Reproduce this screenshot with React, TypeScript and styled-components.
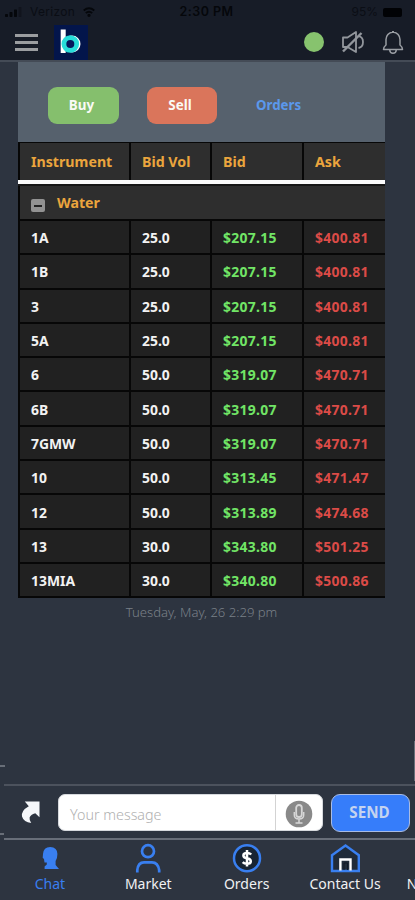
import React from "react";
import styled, { createGlobalStyle } from "styled-components";

const GlobalStyle = createGlobalStyle`
  * { box-sizing: border-box; }
  body { margin: 0; background: #2d3440; overflow: hidden; }
`;

const Screen = styled.div`
  position: relative;
  width: 415px;
  height: 900px;
  overflow: hidden;
  display: flex;
  flex-direction: column;
  background: #2d3440;
  color: #f2f2f2;
  font-family: "Noto Sans", "Open Sans", sans-serif;
`;

const TopArea = styled.header`
  flex: none;
  height: 62px;
  background: #171c27;
  border-bottom: 2px solid #444b56;
`;

const StatusBar = styled.div`
  height: 24px;
  display: grid;
  grid-template-columns: 1fr auto 1fr;
  align-items: center;
  padding: 0 13px 0 5px;
  color: #05070b;
  font: 12px/24px Inter, sans-serif;
`;

const StatusGroup = styled.div<{ $end?: boolean }>`
  display: flex;
  align-items: center;
  gap: ${(p) => (p.$end ? 5 : 8)}px;
  justify-content: ${(p) => (p.$end ? "flex-end" : "flex-start")};
  letter-spacing: ${(p) => (p.$end ? 0 : 0.3)}px;
  color: ${(p) => (p.$end ? "#0b0e15" : "#0a0d14")};
`;

const Clock = styled.span`
  font-weight: 600;
  font-size: 12.5px;
  letter-spacing: 0.45px;
  margin-left: 6px;
`;

const Battery = styled.span`
  width: 19px;
  height: 9px;
  border-radius: 2px;
  background: #010205;
`;

const AppBar = styled.div`
  height: 36px;
  display: flex;
  align-items: center;
  padding: 0 11px 0 15px;
`;

const Logo = styled.div`
  width: 34px;
  height: 35px;
  margin: 1px 0 0 16px;
  background: #03154b;
`;

const Actions = styled.div`
  margin-left: auto;
  display: flex;
  align-items: center;
`;

const OnlineDot = styled.span`
  width: 20px;
  height: 20px;
  border-radius: 50%;
  background: #87c36e;
  margin-right: 17px;
`;

const BellGap = styled.span`
  display: flex;
  margin-left: 17px;
`;

const Conversation = styled.main`
  flex: none;
  height: 722px;
  padding: 0 30px 0 18px;
`;

const Card = styled.section`
  width: 367px;
  background: #070707;
`;

const ActionStrip = styled.div`
  height: 80px;
  display: flex;
  align-items: center;
  padding: 6px 0 0 30px;
  background: #56616d;
`;

const TradeButton = styled.button<{ $color: string; $width: number }>`
  width: ${(p) => p.$width}px;
  height: 37px;
  margin-right: 28px;
  padding: 0 4px 0 0;
  border: 0;
  border-radius: 9px;
  background: ${(p) => p.$color};
  color: #fafaf5;
  font: 700 13.4px/37px "Noto Sans", sans-serif;
`;

const OrdersLink = styled.span`
  margin-left: 11px;
  color: #5b98ec;
  font-weight: 700;
  font-size: 13.3px;
`;

const GridRow = styled.div<{ $head?: boolean }>`
  display: grid;
  grid-template-columns: 109px 79px 90px 81px;
  column-gap: 2px;
  height: ${(p) => (p.$head ? 38 : 34.3)}px;
  padding: ${(p) => (p.$head ? "1px 0 0 2px" : "0 0 2px 2px")};
`;

const Cell = styled.div<{ $color?: string; $head?: boolean; $price?: boolean }>`
  display: flex;
  align-items: center;
  padding: ${(p) => (p.$head ? 0 : 2)}px 0 0 11px;
  background: ${(p) => (p.$head ? "#2e2e2e" : "#212121")};
  color: ${(p) => p.$color || "#f2f2f2"};
  font-size: ${(p) => (p.$head ? 14.2 : 13.9)}px;
  font-weight: 700;
  letter-spacing: ${(p) => (p.$price ? 0.3 : 0)}px;
  line-height: 20px;
  white-space: nowrap;
`;

const Divider = styled.div`
  height: 6px;
  background: #fbfbfb;
  border-bottom: 2px solid #161616;
`;

const GroupRow = styled.div`
  height: 35px;
  display: flex;
  align-items: center;
  margin-left: 2px;
  padding-left: 11px;
  background: #2e2e2e;
  border-bottom: 2px solid #070707;
  color: #eba53d;
  font-size: 14.2px;
  font-weight: 700;
`;

const CollapseBox = styled.span`
  width: 14px;
  height: 13px;
  margin: 6px 12px 0 0;
  border-radius: 2px;
  background: #929292;
  display: grid;
  place-items: center;
  &::after {
    content: "";
    width: 8px;
    height: 2px;
    background: #222;
  }
`;

const Timestamp = styled.div`
  width: 367px;
  margin-top: 4px;
  text-align: center;
  color: #7a8088;
  font-size: 13.1px;
  font-weight: 300;
  line-height: 20px;
`;

const Composer = styled.form`
  flex: none;
  height: 56px;
  margin: 0 0 0 4px;
  display: flex;
  align-items: center;
  padding: 0 5px 0 16px;
  border-top: 2px solid #4c525d;
  border-bottom: 2px solid #686e79;
`;

const MessageBox = styled.div`
  flex: none;
  width: 265px;
  height: 37px;
  margin: 1px 8px 0 17px;
  display: flex;
  align-items: center;
  overflow: hidden;
  border: 1px solid #d6d9dd;
  border-radius: 7px;
  background: #fff;
`;

const MessageText = styled.span`
  flex: 1;
  height: 100%;
  padding: 4px 0 0 11px;
  color: #b0b0b0;
  font-size: 14.3px;
  font-weight: 300;
  line-height: 32px;
  border-right: 1px solid #d3d3d3;
`;

const MicHolder = styled.span`
  width: 46px;
  height: 100%;
  display: grid;
  place-items: center;
  padding-top: 3px;
`;

const SendButton = styled.button`
  width: 79px;
  height: 38px;
  margin-top: 1px;
  padding: 0 2px 1px 0;
  border: 1.5px solid #a9bce4;
  border-radius: 9px;
  background: #367dfa;
  color: #c4d3ef;
  font: 700 15.2px/32px "Noto Sans", sans-serif;
`;

const TabBar = styled.nav`
  flex: none;
  width: 516px;
  height: 60px;
  display: grid;
  grid-template-columns: repeat(5, 98.4px);
  padding-left: 0.7px;
`;

const Tab = styled.div<{ $active?: boolean; $partial?: boolean }>`
  display: flex;
  flex-direction: column;
  align-items: ${(p) => (p.$partial ? "flex-start" : "center")};
  padding: 3px 0 0 ${(p) => (p.$partial ? 12.5 : 0)}px;
  color: ${(p) => (p.$active ? "#397ff0" : "#f0f1f3")};
  font-size: 14px;
  line-height: 20px;
  svg { flex: none; height: 31px; }
`;

const TabSpacer = styled.span`
  height: 31px;
`;

const EdgeMark = styled.span<{ $top: number; $height: number; $width: number; $right?: boolean }>`
  position: absolute;
  top: ${(p) => p.$top}px;
  height: ${(p) => p.$height}px;
  width: ${(p) => p.$width}px;
  ${(p) => (p.$right ? "right: 0;" : "left: 0;")}
  background: #686e78;
`;

const SignalIcon = () => (
  <svg width="17" height="11" viewBox="0 0 17 11" fill="#05070b">
    <rect x="0" y="7" width="3" height="3" rx=".7" />
    <rect x="4.5" y="5" width="3" height="5" rx=".7" />
    <rect x="9" y="2.5" width="3" height="7.5" rx=".7" />
    <rect x="13.5" y="0" width="3" height="10" rx=".7" opacity=".35" />
  </svg>
);

const WifiIcon = () => (
  <svg width="12" height="10" viewBox="0 0 12 10" fill="none" stroke="#05070b" strokeWidth="1.9">
    <path d="M.7 3.4Q6-.8 11.3 3.4M2.8 6Q6 3.4 9.2 6" />
    <circle cx="6" cy="8.3" r=".7" fill="#05070b" />
  </svg>
);

const MenuIcon = () => (
  <svg width="23" height="20" viewBox="0 0 23 20" stroke="#9b9da0" strokeWidth="3">
    <path d="M0 3.5H23M0 10.5H23M0 17.5H23" />
  </svg>
);

const LogoMark = () => (
  <svg width="34" height="35" viewBox="0 0 34 35">
    <rect x="6.7" y="4.5" width="5" height="23.5" fill="#fff" />
    <circle cx="18" cy="19" r="6" fill="none" stroke="#fff" strokeWidth="5" />
    <circle cx="16.3" cy="19" r="6.4" fill="#06165c" stroke="#27dcda" strokeWidth="4.8" />
  </svg>
);

const MutedIcon = () => (
  <svg width="24" height="24" viewBox="0 0 24 24" fill="none" stroke="#92969c" strokeWidth="1.8" strokeLinejoin="round">
    <path d="M2 7.5H6.5L15 2V22L6.5 17H2ZM17.5 6.2Q22 7 22 12T17.5 18" />
    <path d="M2 21.5L20.5 3" strokeWidth="2.4" />
  </svg>
);

const BellIcon = () => (
  <svg width="22" height="25" viewBox="0 0 22 25" fill="none" stroke="#999da3" strokeWidth="1.5" strokeLinejoin="round">
    <path d="M1.5 19.5Q1.5 17 4 15V9.5Q4.3 3.2 11 2Q17.7 3.2 18 9.5V15Q20.5 17 20.5 19.5ZM7.7 20Q8 23.3 11 23.3T14.3 20M10 1.8H12" />
  </svg>
);

const ShareArrow = () => (
  <svg width="21" height="24" viewBox="0 0 21 24" fill="#f5f7fa">
    <path d="M4.8 1.5H19.5V17.3L15.3 13.2Q10.5 14.5 9.6 17.5Q9.2 20.5 11.2 23Q3.8 22.3 2 16.5Q1 10.5 8.8 6.2Z" />
  </svg>
);

const MicIcon = () => (
  <svg width="28" height="28" viewBox="0 0 28 28" fill="none" stroke="#d7d7d7" strokeWidth="1.5">
    <circle cx="14" cy="14" r="13.3" fill="#898989" stroke="none" />
    <rect x="11.2" y="5" width="5.6" height="12" rx="2.8" strokeWidth="1.8" />
    <path d="M9.3 12V15Q9.3 19 14 19T18.7 15V12M14 19V23M10.5 23H17.5" />
  </svg>
);

const HeadIcon = () => (
  <svg width="32" height="31" viewBox="0 0 32 31" fill="#397ff0">
    <path d="M9 11Q9.5 4 16.2 4Q23.4 4.3 23.4 11Q23.4 15.5 21.6 18V22L25 26H10.6V23.5L12.8 21.5V19.5H10.5L10 16L8.7 14.8Z" />
  </svg>
);

const UserIcon = () => (
  <svg width="32" height="31" viewBox="0 0 32 31" fill="none" stroke="#397ff0" strokeWidth="2.7">
    <circle cx="16" cy="8.2" r="6" />
    <path d="M5.3 29.5V27.2Q6 19.3 12 19.3H20Q26 19.3 27.2 27.2V29.5" />
  </svg>
);

const DollarIcon = () => (
  <svg width="32" height="31" viewBox="0 0 32 31" fill="none">
    <circle cx="16" cy="15.2" r="13" fill="#182433" stroke="#397ff0" strokeWidth="2.5" />
    <path d="M20.2 11.5Q18.8 10 16 10Q12.4 10 12.4 12.5Q12.4 14.7 16 15.2Q19.8 15.8 19.8 18.2Q19.8 20.8 16 20.8Q13.2 20.8 11.7 19.2M16 7V23.5" stroke="#fff" strokeWidth="2.5" />
  </svg>
);

const HomeIcon = () => (
  <svg width="32" height="31" viewBox="0 0 32 31" fill="none">
    <path d="M3 12.2L16.5 2.6L29.8 12.2V28H3Z" fill="#202b39" stroke="#397ff0" strokeWidth="2.4" />
    <path d="M11.4 27.5V16.5H21.5V27.5" stroke="#fff" strokeWidth="2.4" />
    <path d="M15 27V20H18.5V27" stroke="#101925" strokeWidth="1" />
  </svg>
);

const GOLD = "#eba53d";
const quotes = [
  ["1A", "25.0", "$207.15", "$400.81"],
  ["1B", "25.0", "$207.15", "$400.81"],
  ["3", "25.0", "$207.15", "$400.81"],
  ["5A", "25.0", "$207.15", "$400.81"],
  ["6", "50.0", "$319.07", "$470.71"],
  ["6B", "50.0", "$319.07", "$470.71"],
  ["7GMW", "50.0", "$319.07", "$470.71"],
  ["10", "50.0", "$313.45", "$471.47"],
  ["12", "50.0", "$313.89", "$474.68"],
  ["13", "30.0", "$343.80", "$501.25"],
  ["13MIA", "30.0", "$340.80", "$500.86"],
];

export default function App() {
  return (
    <Screen>
      <GlobalStyle />
      <TopArea>
        <StatusBar>
          <StatusGroup><SignalIcon />Verizon<WifiIcon /></StatusGroup>
          <Clock>2:30 PM</Clock>
          <StatusGroup $end>95%<Battery /></StatusGroup>
        </StatusBar>
        <AppBar>
          <MenuIcon />
          <Logo><LogoMark /></Logo>
          <Actions>
            <OnlineDot />
            <MutedIcon />
            <BellGap><BellIcon /></BellGap>
          </Actions>
        </AppBar>
      </TopArea>
      <Conversation>
        <Card>
          <ActionStrip>
            <TradeButton $color="#85bf6d" $width={71}>Buy</TradeButton>
            <TradeButton $color="#da755b" $width={70}>Sell</TradeButton>
            <OrdersLink>Orders</OrdersLink>
          </ActionStrip>
          <GridRow $head>
            {["Instrument", "Bid Vol", "Bid", "Ask"].map((t) => (
              <Cell key={t} $head $color={GOLD}>{t}</Cell>
            ))}
          </GridRow>
          <Divider />
          <GroupRow><CollapseBox />Water</GroupRow>
          {quotes.map(([name, vol, bid, ask]) => (
            <GridRow key={name}>
              <Cell>{name}</Cell>
              <Cell>{vol}</Cell>
              <Cell $price $color="#71e566">{bid}</Cell>
              <Cell $price $color="#db4b47">{ask}</Cell>
            </GridRow>
          ))}
        </Card>
        <Timestamp>Tuesday, May, 26 2:29 pm</Timestamp>
      </Conversation>
      <Composer>
        <ShareArrow />
        <MessageBox>
          <MessageText>Your message</MessageText>
          <MicHolder><MicIcon /></MicHolder>
        </MessageBox>
        <SendButton type="button">SEND</SendButton>
      </Composer>
      <TabBar>
        <Tab $active><HeadIcon />Chat</Tab>
        <Tab><UserIcon />Market</Tab>
        <Tab><DollarIcon />Orders</Tab>
        <Tab><HomeIcon />Contact Us</Tab>
        <Tab $partial><TabSpacer />N</Tab>
      </TabBar>
      <EdgeMark $top={765} $height={2} $width={5} />
      <EdgeMark $top={833} $height={2} $width={4} />
      <EdgeMark $top={741} $height={40} $width={1} $right />
    </Screen>
  );
}
